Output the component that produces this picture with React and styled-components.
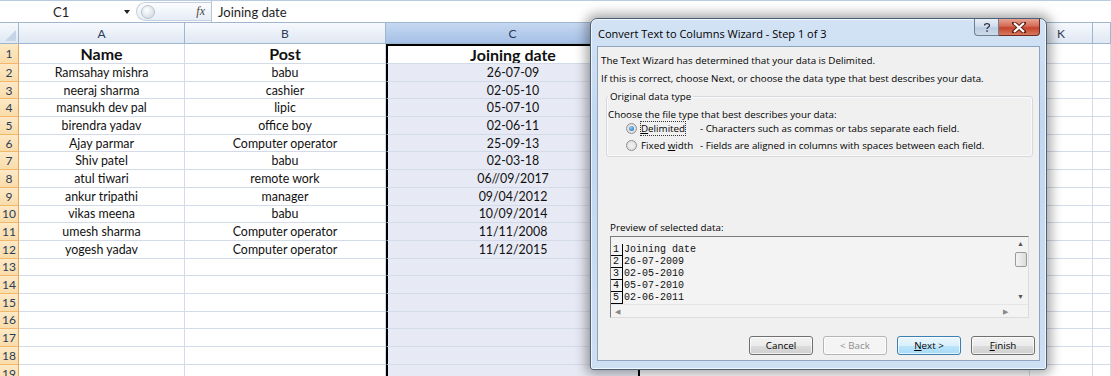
import React from "react";
import styled, { createGlobalStyle } from "styled-components";

const GlobalStyle = createGlobalStyle`
  body {
    margin: 0;
    overflow: hidden;
    background: #ffffff;
    font-family: "Lato", "Open Sans", sans-serif;
  }
`;

const COLS = "19px 166px 201px 254px 390px 63px 1fr";
const GRID = "#d4dbe8";

const rows = [
  ["Ramsahay mishra", "babu", "26-07-09"],
  ["neeraj sharma", "cashier", "02-05-10"],
  ["mansukh dev pal", "lipic", "05-07-10"],
  ["birendra yadav", "office boy", "02-06-11"],
  ["Ajay parmar", "Computer operator", "25-09-13"],
  ["Shiv patel", "babu", "02-03-18"],
  ["atul tiwari", "remote work", "06//09/2017"],
  ["ankur tripathi", "manager", "09/04/2012"],
  ["vikas meena", "babu", "10/09/2014"],
  ["umesh sharma", "Computer operator", "11/11/2008"],
  ["yogesh yadav", "Computer operator", "11/12/2015"],
  ["", "", ""],
  ["", "", ""],
  ["", "", ""],
  ["", "", ""],
  ["", "", ""],
  ["", "", ""],
  ["", "", ""],
];

const preview = ["Joining date", "26-07-2009", "02-05-2010", "05-07-2010", "02-06-2011"];

const Page = styled.div`
  position: relative;
  width: 1111px;
  height: 376px;
  overflow: hidden;
  background: #fff;
`;

/* ---------- formula bar ---------- */
const FormulaBar = styled.div`
  display: flex;
  align-items: stretch;
  height: 21px;
  border-top: 1px solid #b8cbe2;
  border-bottom: 1px solid #9eb6ce;
  background: #fff;
  font-family: "Lato", sans-serif;
  font-size: 13px;
  color: #1e1e1e;
`;

const NameBox = styled.div`
  width: 136px;
  display: flex;
  align-items: center;
  position: relative;
  span {
    margin-left: 53px;
  }
  &::after {
    content: "";
    position: absolute;
    right: 6px;
    top: 9px;
    border-left: 3px solid transparent;
    border-right: 3px solid transparent;
    border-top: 4px solid #222;
  }
`;

const FxArea = styled.div`
  width: 74px;
  display: flex;
  align-items: center;
  position: relative;
  background: linear-gradient(#fbfcfe, #e7edf5);
  border-radius: 10px 0 0 10px;
  border: 1px solid #c4d0de;
  border-right: none;
  margin: 1px 0;
  i {
    position: absolute;
    right: 6px;
    font-family: "Liberation Serif", serif;
    font-size: 12px;
    color: #444;
  }
`;

const Knob = styled.div`
  width: 12px;
  height: 12px;
  border-radius: 50%;
  margin-left: 4px;
  background: radial-gradient(circle at 40% 35%, #ffffff, #c9d3de);
  border: 1px solid #b8c3cf;
`;

const FormulaInput = styled.div`
  flex: 1;
  display: flex;
  align-items: center;
  padding-left: 6px;
  border-left: 1px solid #b8c6d8;
`;

/* ---------- sheet ---------- */
const Row = styled.div`
  display: grid;
  grid-template-columns: ${COLS};
  height: ${(p) => p.$h}px;
  box-sizing: border-box;
`;

const ColHead = styled.div`
  box-sizing: border-box;
  display: flex;
  align-items: center;
  justify-content: center;
  font-size: 12px;
  color: #2a3c58;
  border-right: 1px solid #9eb6ce;
  border-bottom: 1px solid #9eb6ce;
  background: ${(p) =>
    p.$sel
      ? "linear-gradient(#c6d8f1, #a5c0e6)"
      : "linear-gradient(#f6f9fd, #e0e8f3)"};
`;

const Corner = styled(ColHead)`
  position: relative;
  &::after {
    content: "";
    position: absolute;
    right: 2px;
    bottom: 2px;
    border-left: 11px solid transparent;
    border-bottom: 11px solid #c5d4e6;
  }
`;

const RowHead = styled.div`
  box-sizing: border-box;
  display: flex;
  align-items: center;
  justify-content: center;
  font-size: 12px;
  color: #2a3c58;
  background: linear-gradient(#fde9c6, #f9dcaa);
  border-right: 1px solid #f0a24a;
  border-bottom: 1px solid #f3b769;
`;

const Cell = styled.div`
  box-sizing: border-box;
  display: flex;
  align-items: center;
  justify-content: center;
  white-space: nowrap;
  overflow: hidden;
  font-size: ${(p) => (p.$bold ? 16 : 12.4)}px;
  font-weight: ${(p) => (p.$bold ? 700 : 400)};
  color: #111;
  border-right: 1px solid ${GRID};
  border-bottom: 1px solid ${GRID};
  background: ${(p) => (p.$shade ? "#e7eaf4" : "#fff")};
`;

const SelCell = styled(Cell)`
  border-left: 2px solid #000;
  border-right: 2px solid #000;
  border-top: ${(p) => (p.$top ? "2px solid #000" : "none")};
`;

/* ---------- dialog ---------- */
const Dialog = styled.div`
  position: absolute;
  left: 590px;
  top: 18px;
  width: 457px;
  height: 352px;
  box-sizing: border-box;
  padding: 0 6px 8px 6px;
  display: flex;
  flex-direction: column;
  border: 1px solid #4a5f78;
  border-radius: 7px 7px 3px 3px;
  background: linear-gradient(180deg, #d3e3f5 0%, #c2d8f0 30%, #cddff2 100%);
  box-shadow: 0 0 12px 4px rgba(0, 0, 0, 0.35), inset 0 0 0 1px rgba(255, 255, 255, 0.7);
  font-family: "Open Sans", "Noto Sans", sans-serif;
  font-size: 9.8px;
  color: #000;
`;

const TitleBar = styled.div`
  height: 27px;
  display: flex;
  align-items: flex-start;
  justify-content: space-between;
`;

const Title = styled.div`
  font-size: 11px;
  padding-top: 7px;
  padding-left: 1px;
  color: #000;
`;

const CapButtons = styled.div`
  display: flex;
`;

const CapBtn = styled.div`
  width: ${(p) => (p.$close ? 41 : 25)}px;
  height: 17px;
  box-sizing: border-box;
  display: flex;
  align-items: center;
  justify-content: center;
  border: 1px solid ${(p) => (p.$close ? "#6d2a22" : "#6f7f93")};
  border-top: none;
  border-radius: ${(p) => (p.$close ? "0 0 4px 0" : "0 0 0 4px")};
  border-left: ${(p) => (p.$close ? "none" : undefined)};
  background: ${(p) =>
    p.$close
      ? "linear-gradient(#e8a493 0%, #d46a55 45%, #c3432c 55%, #d8795d 100%)"
      : "linear-gradient(#e7eef7 0%, #d2deec 45%, #bccde2 55%, #cddbea 100%)"};
`;

const Body = styled.div`
  flex: 1;
  background: #f0f0f0;
  border: 1px solid #8ea4bf;
  padding: 4px 0 0 3px;
  display: flex;
  flex-direction: column;
`;

const Line = styled.div`
  height: 18px;
  display: flex;
  align-items: center;
  white-space: nowrap;
  padding-left: ${(p) => p.$indent || 0}px;
`;

const Group = styled.fieldset`
  margin: 3px 6px 0 5px;
  padding: 5px 4px 0 0;
  border: 1px solid #d5d9de;
  border-radius: 3px;
  box-shadow: inset 0 0 0 1px #fafafa;
  height: 60px;
  legend {
    padding: 0 2px;
    margin-left: 1px;
    font-size: 9.8px;
  }
`;

const GroupLine = styled(Line)`
  height: 12px;
  padding-left: 1px;
`;

const RadioRow = styled.div`
  height: 17px;
  display: flex;
  align-items: center;
  padding-left: 19px;
  white-space: nowrap;
`;

const Radio = styled.span`
  width: 11px;
  height: 11px;
  box-sizing: border-box;
  border-radius: 50%;
  border: 1px solid #8f8f8f;
  background: radial-gradient(circle at 50% 50%, #f4f4f4, #d8d8d8);
  display: inline-flex;
  align-items: center;
  justify-content: center;
  margin-right: 4px;
  &::after {
    content: "";
    display: ${(p) => (p.$on ? "block" : "none")};
    width: 5px;
    height: 5px;
    border-radius: 50%;
    background: radial-gradient(circle at 40% 35%, #8fd0ff, #1a5fa6);
  }
`;

const RadioLabel = styled.span`
  width: 59px;
  span {
    outline: ${(p) => (p.$focus ? "1px dotted #333" : "none")};
  }
`;

const Spacer = styled.div`
  height: ${(p) => p.$h}px;
`;

const PreviewBox = styled.div`
  margin: 0 0 0 9px;
  width: 419px;
  height: 82px;
  box-sizing: border-box;
  border: 1px solid #7b7b7b;
  border-right-color: #dcdcdc;
  border-bottom-color: #dcdcdc;
  display: grid;
  grid-template-columns: 1fr 15px;
  grid-template-rows: 1fr 13px;
  background: #f3f3f3;
`;

const PreviewText = styled.div`
  padding-top: 7px;
  overflow: hidden;
  font-family: "Liberation Mono", monospace;
  font-size: 10px;
  color: #111;
`;

const PLine = styled.div`
  display: flex;
  height: 12px;
  line-height: 12px;
  b {
    font-weight: 400;
    width: 9px;
    padding-left: 2px;
    border-right: 1px solid #000;
    border-bottom: 1px solid #000;
    margin-right: 1px;
  }
`;

const VScroll = styled.div`
  display: flex;
  flex-direction: column;
  align-items: center;
  font-size: 7px;
  color: #555;
  background: #f3f3f3;
  span {
    height: 14px;
    line-height: 14px;
  }
`;

const Thumb = styled.div`
  width: 12px;
  height: 15px;
  box-sizing: border-box;
  border: 1px solid #9a9a9a;
  border-radius: 2px;
  background: linear-gradient(90deg, #f4f4f4, #dcdcdc);
  margin-top: 1px;
`;

const HScroll = styled.div`
  grid-column: 1 / 3;
  display: flex;
  justify-content: space-between;
  align-items: center;
  padding: 0 20px 0 4px;
  font-size: 7px;
  color: #888;
  border-top: 1px solid #e6e6e6;
  background: #f3f3f3;
`;

const ButtonRow = styled.div`
  margin-top: auto;
  margin-bottom: 5px;
  display: flex;
  justify-content: flex-end;
  gap: 10px;
  padding-right: 4px;
`;

const Button = styled.div`
  width: 64px;
  height: 19px;
  box-sizing: border-box;
  border-radius: 3px;
  display: flex;
  align-items: center;
  justify-content: center;
  font-size: 9.8px;
  border: 1px solid ${(p) => (p.$primary ? "#3c7fb1" : p.$disabled ? "#b5b5b5" : "#707070")};
  color: ${(p) => (p.$disabled ? "#8d8d8d" : "#000")};
  background: ${(p) =>
    p.$primary
      ? "linear-gradient(#eaf6fd 0%, #d9f0fc 50%, #bee6fd 51%, #a7d9f5 100%)"
      : p.$disabled
      ? "#f4f4f4"
      : "linear-gradient(#f2f2f2 0%, #ebebeb 50%, #dddddd 51%, #cfcfcf 100%)"};
  box-shadow: inset 0 0 0 1px rgba(255, 255, 255, 0.7);
`;

const CloseGlyph = () => (
  <svg width="14" height="11" viewBox="0 0 14 11">
    <path d="M2 1 L12 10 M12 1 L2 10" stroke="#5a1d14" strokeWidth="4" strokeLinecap="square" />
    <path d="M2 1 L12 10 M12 1 L2 10" stroke="#fff" strokeWidth="2.2" />
  </svg>
);

const HelpGlyph = () => (
  <svg width="10" height="11" viewBox="0 0 10 11">
    <path d="M2.5 3.5 C2.5 1 7.5 1 7.5 3.5 C7.5 5.5 5 5 5 7" fill="none" stroke="#334" strokeWidth="1.3" />
    <rect x="4.3" y="8.3" width="1.5" height="1.5" fill="#334" />
  </svg>
);

export default function App() {
  const letters = ["", "A", "B", "C", "", "K", ""];
  return (
    <Page>
      <GlobalStyle />
      <FormulaBar>
        <NameBox>
          <span>C1</span>
        </NameBox>
        <FxArea>
          <Knob />
          <i>fx</i>
        </FxArea>
        <FormulaInput>Joining date</FormulaInput>
      </FormulaBar>

      <Row $h={21}>
        {letters.map((l, i) =>
          i === 0 ? (
            <Corner key={i} />
          ) : (
            <ColHead key={i} $sel={l === "C"}>
              {l}
            </ColHead>
          )
        )}
      </Row>

      <Row $h={20}>
        <RowHead>1</RowHead>
        <Cell $bold>Name</Cell>
        <Cell $bold>Post</Cell>
        <SelCell $bold $top>
          Joining date
        </SelCell>
        <Cell />
        <Cell />
        <Cell />
      </Row>

      {rows.map((r, i) => (
        <Row key={i} $h={17.7}>
          <RowHead>{i + 2}</RowHead>
          <Cell>{r[0]}</Cell>
          <Cell>{r[1]}</Cell>
          <SelCell $shade>{r[2]}</SelCell>
          <Cell />
          <Cell />
          <Cell />
        </Row>
      ))}

      <Dialog>
        <TitleBar>
          <Title>Convert Text to Columns Wizard - Step 1 of 3</Title>
          <CapButtons>
            <CapBtn>
              <HelpGlyph />
            </CapBtn>
            <CapBtn $close>
              <CloseGlyph />
            </CapBtn>
          </CapButtons>
        </TitleBar>

        <Body>
          <Line>The Text Wizard has determined that your data is Delimited.</Line>
          <Line>If this is correct, choose Next, or choose the data type that best describes your data.</Line>
          <Group>
            <legend>Original data type</legend>
            <GroupLine>Choose the file type that best describes your data:</GroupLine>
            <RadioRow>
              <Radio $on />
              <RadioLabel $focus>
                <span>
                  <u>D</u>elimited
                </span>
              </RadioLabel>
              <span>- Characters such as commas or tabs separate each field.</span>
            </RadioRow>
            <RadioRow>
              <Radio />
              <RadioLabel>
                <span>
                  Fixed <u>w</u>idth
                </span>
              </RadioLabel>
              <span>- Fields are aligned in columns with spaces between each field.</span>
            </RadioRow>
          </Group>
          <Spacer $h={61} />
          <Line $indent={9}>Preview of selected data:</Line>
          <PreviewBox>
            <PreviewText>
              {preview.map((p, i) => (
                <PLine key={i}>
                  <b>{i + 1}</b>
                  {p}
                </PLine>
              ))}
            </PreviewText>
            <VScroll>
              <span>▲</span>
              <Thumb />
              <div style={{ flex: 1 }} />
              <span>▼</span>
            </VScroll>
            <HScroll>
              <span>◀</span>
              <span>▶</span>
            </HScroll>
          </PreviewBox>
          <ButtonRow>
            <Button>Cancel</Button>
            <Button $disabled>&lt; Back</Button>
            <Button $primary>
              <span>
                <u>N</u>ext &gt;
              </span>
            </Button>
            <Button>
              <span>
                <u>F</u>inish
              </span>
            </Button>
          </ButtonRow>
        </Body>
      </Dialog>
    </Page>
  );
}
